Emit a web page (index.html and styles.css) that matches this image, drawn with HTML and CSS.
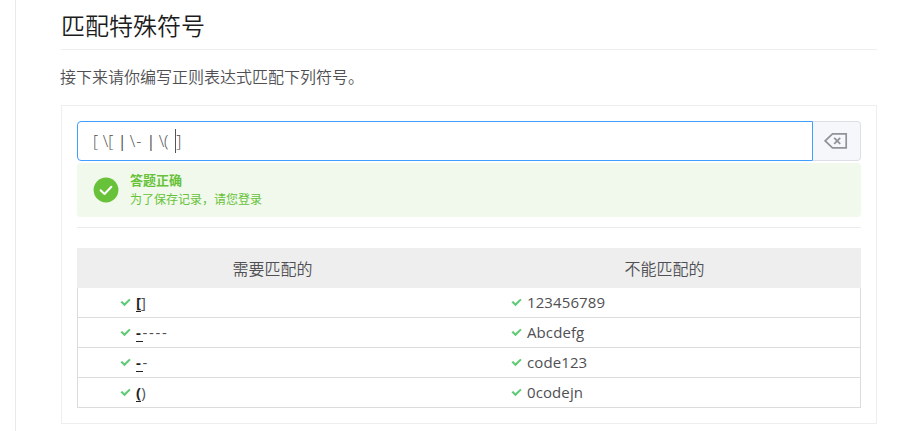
FILE: index.html
```html
<!DOCTYPE html>
<html lang="zh-CN">
<head>
<meta charset="utf-8">
<title>匹配特殊符号</title>
<link rel="stylesheet" href="styles.css">
</head>
<body>
<svg class="defs" aria-hidden="true">
  <symbol id="tick" viewBox="0 0 10 8"><path d="M.4 3.8 2 2.6 4 4.6 8.4.5 9.7 1.8 4.1 7.5Z" fill="#5fca76"/></symbol>
</svg>
<main class="page">
  <h2 class="title">匹配特殊符号</h2>
  <p class="intro">接下来请你编写正则表达式匹配下列符号。</p>
  <section class="card">
    <div class="field">
      <div class="input"><span class="expr">[ \[ <i>|</i> \<u>-</u> <i>|</i> \( </span><span class="caret"></span><span class="expr">]</span></div>
      <button class="clear" aria-label="清除"><svg width="24" height="16" viewBox="0 0 24 16" fill="none" stroke="#909399"><path d="M8.5.9H22.2V14.9H8.5L1.2 7.9Z" stroke-width="1.7"/><path d="M10.2 4.9 16.2 10.9M16.2 4.9 10.2 10.9" stroke-width="1.8"/></svg></button>
    </div>
    <div class="alert">
      <svg width="26" height="26" viewBox="0 0 26 26"><circle cx="13" cy="13" r="12.4" fill="#67c23a"/><path d="M7.6 13.2 11.5 17 18.4 9.7" fill="none" stroke="#fff" stroke-width="2" stroke-linecap="round" stroke-linejoin="round"/></svg>
      <div class="message"><strong>答题正确</strong><span>为了保存记录，请您登录</span></div>
    </div>
    <hr class="rule">
    <div class="table">
      <div class="head"><div>需要匹配的</div><div>不能匹配的</div></div>
      <div class="row"><div><svg class="tick"><use href="#tick"/></svg><b>[</b>]</div><div><svg class="tick"><use href="#tick"/></svg>123456789</div></div>
      <div class="row"><div class="dashes"><svg class="tick"><use href="#tick"/></svg><b>-</b>----</div><div><svg class="tick"><use href="#tick"/></svg>Abcdefg</div></div>
      <div class="row"><div class="dashes"><svg class="tick"><use href="#tick"/></svg><b>-</b>-</div><div><svg class="tick"><use href="#tick"/></svg>code123</div></div>
      <div class="row"><div><svg class="tick"><use href="#tick"/></svg><b>(</b>)</div><div><svg class="tick"><use href="#tick"/></svg>0codejn</div></div>
    </div>
  </section>
</main>
</body>
</html>
```
FILE: styles.css
```css
* { box-sizing: border-box; }
body { margin: 0; background: #fff; color: #505054; font: 350 16px/24px "Open Sans", "Noto Sans CJK SC", sans-serif; }
.defs { display: none; }
.page { height: 431px; margin-left: 15px; padding: 0 24px 0 45px; border-left: 1px solid #eaeaea; overflow: hidden; }
.title { height: 50px; margin: 0; padding-top: 8px; border-bottom: 1px solid #eee; color: #1c1c1c; font-size: 24px; line-height: 36px; font-weight: 350; }
.intro { margin: 15px 0 16px -1px; }
.card { height: 319px; padding: 15px; border: 1px solid #eee; }
.field { display: flex; height: 40px; }
.input { flex: 1; display: flex; align-items: center; padding-left: 15px; border: 1px solid #409eff; border-radius: 4px 0 0 4px; }
.expr { white-space: pre; color: #4c4c50; font-weight: 300; word-spacing: .6px; }
.expr i { margin: 0 -1.5px 0 -.5px; font-style: normal; font-weight: 500; }
.expr u { margin: 0 1px; text-decoration: none; }
.caret { width: 1px; height: 24px; margin-left: 2px; background: #555; }
.clear { width: 48px; padding: 0 0 0 11px; display: flex; align-items: center; border: 1px solid #dcdfe6; border-left: 0; border-radius: 0 4px 4px 0; background: #f5f7fa; }
.alert { display: flex; align-items: center; height: 54px; margin-top: 2px; padding-left: 16px; border-radius: 4px; background: #f0f9eb; color: #67c23a; }
.alert svg { margin-top: -1px; }
.message { display: flex; flex-direction: column; margin-left: 11px; }
.message strong { font-size: 13px; line-height: 18px; font-weight: 700; }
.message span { margin-bottom: -1px; font-size: 12px; line-height: 21px; font-weight: 400; }
.rule { height: 1px; margin: 10px 0 20px; border: 0; background: #ebebeb; }
.head, .row { display: grid; grid-template-columns: 1fr 1fr; }
.head { height: 40px; background: #eee; line-height: 42px; text-align: center; }
.head div { margin-left: -1px; }
.row { height: 30px; border: 1px solid #dcdcdc; border-top: 0; line-height: 29px; font-size: 15px; font-weight: 400; letter-spacing: .1px; }
.row > div { display: flex; padding-left: 42px; }
.tick { width: 11px; height: 9px; margin: 10px 5px 0 0; }
.row b { height: 24px; border-bottom: 1px solid #222; color: #222; }
.row .dashes { letter-spacing: 1.7px; }
```
